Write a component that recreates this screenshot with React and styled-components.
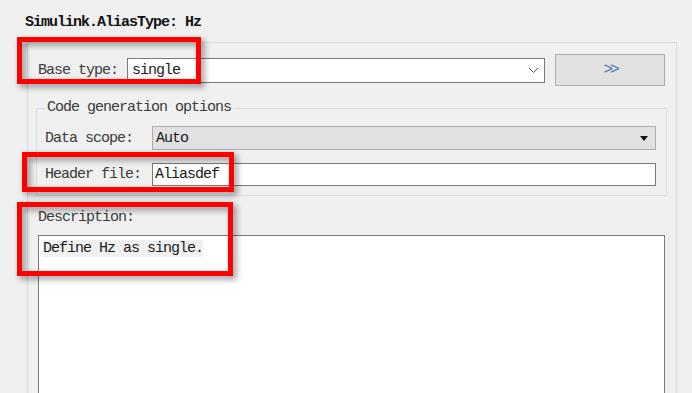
import * as React from 'react';
import styled, { createGlobalStyle } from 'styled-components';

const GlobalStyle = createGlobalStyle`
  body {
    margin: 0;
    background: #f0f0f0;
    font-family: "Liberation Mono", "DejaVu Sans Mono", monospace;
    font-size: 15px;
    letter-spacing: -1px;
    color: #333;
    overflow: hidden;
  }
`;

const App = () => {
  return (
    <Page>
      <GlobalStyle />
      <Title>Simulink.AliasType: Hz</Title>

      <Panel>
        <BaseRow>
          <Label width={89}>Base type:</Label>
          <Combo>
            <Value>single</Value>
            <svg width="11" height="7" viewBox="0 0 11 7">
              <path d="M1 1 L5.5 5.5 L10 1" fill="none" stroke="#555" strokeWidth="1" />
            </svg>
          </Combo>
          <MoreButton>&gt;&gt;</MoreButton>
        </BaseRow>

        <Group>
          <Legend>Code generation options</Legend>
          <FieldRow>
            <Label width={107}>Data scope:</Label>
            <Dropdown>
              <Value>Auto</Value>
              <svg width="8" height="5" viewBox="0 0 8 5">
                <path d="M0 0 H8 L4 5 Z" fill="#111" />
              </svg>
            </Dropdown>
          </FieldRow>
          <FieldRow gap={13}>
            <Label width={107}>Header file:</Label>
            <TextInput>
              <Value>Aliasdef</Value>
            </TextInput>
          </FieldRow>
        </Group>

        <DescLabel>Description:</DescLabel>
        <TextArea>
          <Marked>Define Hz as single.</Marked>
        </TextArea>
      </Panel>

      <Callout x={17} y={37} w={184} h={47} />
      <Callout x={22} y={152} w={212} h={40} />
      <Callout x={17} y={202} w={216} h={74} />
    </Page>
  );
};

export default App;

const Page = styled.div`
  position: relative;
  height: 393px;
  overflow: hidden;
`;

const Title = styled.div`
  padding: 15px 0 0 25px;
  height: 16px;
  line-height: 16px;
  font-weight: bold;
  color: #111;
`;

const Panel = styled.div`
  box-sizing: border-box;
  width: 650px;
  margin: 11px 0 0 27px;
  padding: 11px 11px 0 10px;
  border: 1px solid #dadada;
  border-bottom: none;
  height: 400px;
`;

const BaseRow = styled.div`
  display: flex;
  align-items: center;
  height: 32px;
`;

const Label = styled.div`
  flex: none;
  width: ${props => props.width}px;
  line-height: 16px;
  padding-top: 1px;
  color: #3a3a3a;
`;

const Value = styled.span`
  flex: 1;
  color: #1a1a1a;
  line-height: 16px;
  padding-top: 1px;
`;

const Combo = styled.div`
  box-sizing: border-box;
  width: 418px;
  height: 25px;
  display: flex;
  align-items: center;
  padding: 0 5px 0 4px;
  background: #fff;
  border: 1px solid #7a7a7a;
`;

const MoreButton = styled.div`
  box-sizing: border-box;
  width: 110px;
  height: 32px;
  margin-left: 10px;
  display: flex;
  align-items: center;
  justify-content: center;
  background: #e1e1e1;
  border: 1px solid #adadad;
  color: #4a72b0;
  font-size: 16px;
  letter-spacing: -3px;
`;

const Group = styled.fieldset`
  margin: 14px -2px 0;
  padding: 0 10px 9px 8px;
  border: 1px solid #dcdcdc;
  min-width: 0;
`;

const Legend = styled.legend`
  padding: 0 2px;
  line-height: 16px;
  color: #3a3a3a;
`;

const FieldRow = styled.div`
  display: flex;
  align-items: center;
  margin-top: ${props => props.gap || 10}px;
`;

const Dropdown = styled.div`
  box-sizing: border-box;
  flex: 1;
  height: 24px;
  display: flex;
  align-items: center;
  padding: 0 7px 0 3px;
  background: #e1e1e1;
  border: 1px solid #adadad;
`;

const TextInput = styled.div`
  box-sizing: border-box;
  flex: 1;
  height: 23px;
  display: flex;
  align-items: center;
  padding: 0 3px 0 2px;
  background: #fff;
  border: 1px solid #7a7a7a;
`;

const DescLabel = styled.div`
  margin-top: 12px;
  line-height: 16px;
  padding-top: 2px;
  color: #3a3a3a;
`;

const TextArea = styled.div`
  box-sizing: border-box;
  margin-top: 9px;
  height: 200px;
  padding: 4px;
  background: #fff;
  border: 1px solid #7a7a7a;
`;

const Marked = styled.span`
  display: inline-block;
  background: #f0f0f0;
  line-height: 17px;
  color: #1a1a1a;
`;

const Callout = styled.div`
  position: absolute;
  left: ${props => props.x}px;
  top: ${props => props.y}px;
  width: ${props => props.w}px;
  height: ${props => props.h}px;
  box-sizing: border-box;
  border: 5px solid #ff0000;
  filter: drop-shadow(3px 3px 3px rgba(0, 0, 0, 0.45));
`;
